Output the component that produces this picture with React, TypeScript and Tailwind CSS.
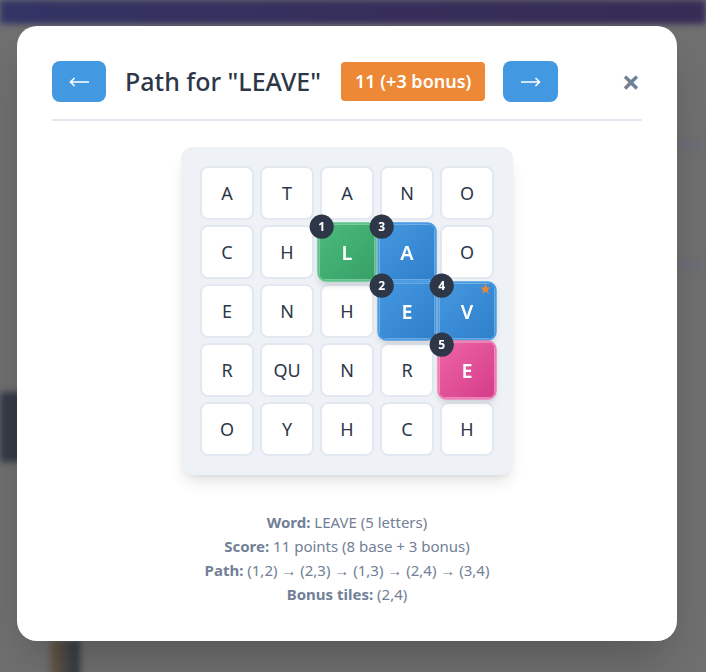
const grid = [
  ["A", "T", "A", "N", "O"],
  ["C", "H", "L", "A", "O"],
  ["E", "N", "H", "E", "V"],
  ["R", "QU", "N", "R", "E"],
  ["O", "Y", "H", "C", "H"],
];

// path order keyed by "row,col"
const path: Record<string, { n: number; tone: "start" | "mid" | "end" }> = {
  "1,2": { n: 1, tone: "start" },
  "2,3": { n: 2, tone: "mid" },
  "1,3": { n: 3, tone: "mid" },
  "2,4": { n: 4, tone: "mid" },
  "3,4": { n: 5, tone: "end" },
};

const bonus = "2,4";

const toneClass = {
  start:
    "bg-gradient-to-br from-[#4bbb7c] to-[#37a066] border-[#5cc48a] text-white font-semibold",
  mid: "bg-gradient-to-br from-[#4598e0] to-[#2f7fcb] border-[#4a9be2] text-white font-semibold",
  end: "bg-gradient-to-br from-[#ee64a6] to-[#d43c89] border-[#f07ab3] text-white font-semibold",
};

function Arrow({ flip }: { flip?: boolean }) {
  return (
    <svg
      width="20"
      height="10"
      viewBox="0 0 20 10"
      fill="none"
      stroke="currentColor"
      strokeWidth="1.6"
      className={flip ? "rotate-180" : ""}
    >
      <path d="M20 5H1.5M5.5 1L1.5 5l4 4" />
    </svg>
  );
}

function Tile({ letter, r, c }: { letter: string; r: number; c: number }) {
  const key = `${r},${c}`;
  const p = path[key];
  if (!p) {
    return (
      <div className="w-[54px] h-[54px] rounded-lg bg-white border-2 border-[#e2e8f0] flex items-center justify-center text-[18px] text-[#2d3748]">
        {letter}
      </div>
    );
  }
  return (
    <div
      className={`relative w-[54px] h-[54px] rounded-lg border-2 flex items-center justify-center text-[18px] scale-110 shadow-md z-10 ${toneClass[p.tone]}`}
    >
      {letter}
      <span className="absolute -top-[9px] -left-[9px] w-[22px] h-[22px] rounded-full bg-[#2d3748] text-white text-[11px] font-bold flex items-center justify-center">
        {p.n}
      </span>
      {key === bonus && (
        <span className="absolute top-[-1px] right-[3px] text-[11px] leading-none text-[#ed8936]">
          ★
        </span>
      )}
    </div>
  );
}

export default function App() {
  return (
    <div
      className="relative w-[706px] h-[672px] overflow-hidden bg-[#707071]"
      style={{ fontFamily: '"Noto Sans", "Open Sans", sans-serif' }}
    >
      {/* blurred page behind the overlay */}
      <div className="absolute inset-0 blur-[3px]">
        <div className="h-[24px] bg-gradient-to-r from-[#333566] via-[#372f5c] to-[#362c56]" />
        <div className="absolute left-0 top-[392px] w-[40px] h-[70px] bg-[#343a47]" />
        <div className="absolute left-[50px] top-[640px] w-[30px] h-[40px] bg-gradient-to-r from-[#6b5a45] to-[#2d3a44]" />
        <div className="absolute right-0 top-[142px] w-[40px] h-[6px] bg-[#6b6d7a]" />
        <div className="absolute right-0 top-[262px] w-[40px] h-[6px] bg-[#6b6d7a]" />
      </div>

      {/* modal */}
      <div className="absolute inset-0 flex pl-[17px] pt-[26px]">
        <div className="w-[660px] h-[615px] bg-white rounded-[20px] px-[35px] pt-[35px] shadow-2xl">
          <div className="flex items-center pb-[17px] border-b-2 border-[#e2e8f0]">
            <button className="w-[54px] h-[41px] rounded-lg bg-[#4299e1] text-white flex items-center justify-center">
              <Arrow />
            </button>
            <h2 className="ml-[19px] text-[25px] font-medium text-[#2d3748] leading-none">
              Path for "LEAVE"
            </h2>
            <span className="ml-[20px] h-[39px] px-[14px] rounded bg-[#ed8936] text-white text-[18px] font-semibold flex items-center">
              11 (+3 bonus)
            </span>
            <button className="ml-[18px] w-[55px] h-[41px] rounded-lg bg-[#4299e1] text-white flex items-center justify-center">
              <Arrow flip />
            </button>
            <button className="ml-auto mr-[2px] text-[32px] font-bold leading-none text-[#718096]">
              ×
            </button>
          </div>

          <div className="flex justify-center mt-[26px]">
            <div className="bg-[#eef2f7] rounded-xl p-[19px] shadow-lg">
              <div className="grid grid-cols-5 gap-x-[6px] gap-y-[5px]">
                {grid.map((row, r) =>
                  row.map((l, c) => <Tile key={`${r}-${c}`} letter={l} r={r} c={c} />)
                )}
              </div>
            </div>
          </div>

          <div className="mt-[35px] text-center text-[15px] leading-[24px] text-[#718096]">
            <p>
              <b>Word:</b> LEAVE (5 letters)
            </p>
            <p>
              <b>Score:</b> 11 points (8 base + 3 bonus)
            </p>
            <p>
              <b>Path:</b> (1,2) → (2,3) → (1,3) → (2,4) → (3,4)
            </p>
            <p>
              <b>Bonus tiles:</b> (2,4)
            </p>
          </div>
        </div>
      </div>
    </div>
  );
}
